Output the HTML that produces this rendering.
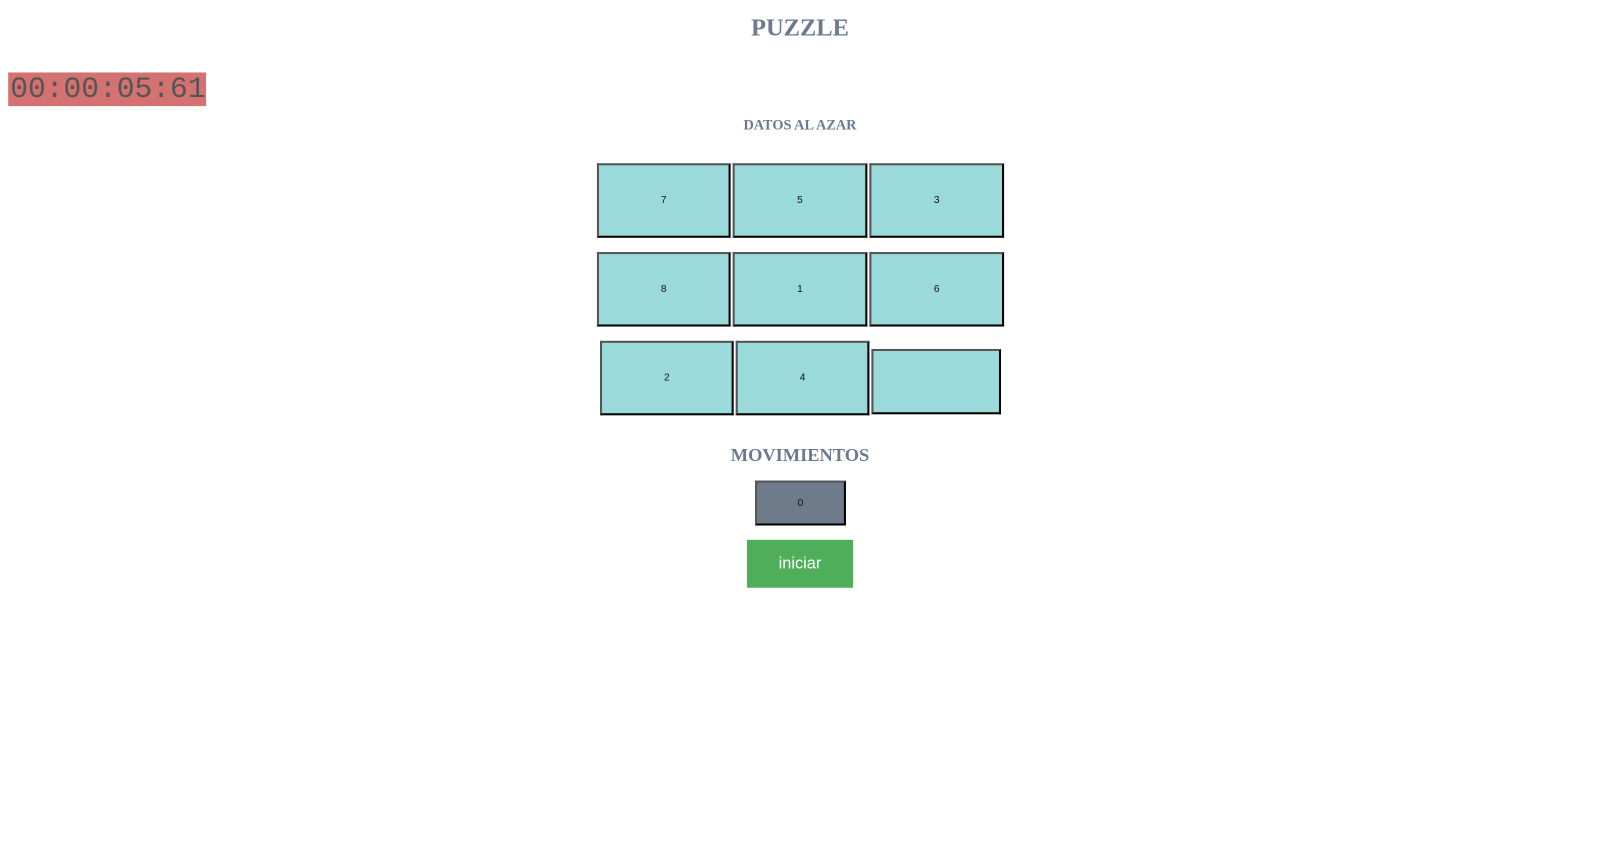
<!DOCTYPE html>
<html><head><style>
body{margin:0;width:1600px;height:860px;background:#fff;position:relative;font-family:"Liberation Sans",sans-serif;overflow:hidden}
#w{position:absolute;left:0;top:0;width:1568px;height:843px;transform:scale(1.0204);transform-origin:0 0}
.a{position:absolute}
.t{position:absolute;box-sizing:border-box;background:#9adada;border:2px solid;border-color:#555 #000 #000 #555;font-size:10px;color:#111;display:flex;align-items:center;justify-content:center}
.h{position:absolute;left:0;width:1568px;text-align:center;font-family:"Liberation Serif",serif;font-weight:bold;color:#6b7a8f}
</style></head><body><div id="w">
<div class="h" style="top:15px;font-size:24px">PUZZLE</div>
<div class="a" style="left:8px;top:71px;width:194px;height:33px;background:#d47272;color:#555;font-family:'Liberation Mono',monospace;font-size:29px;line-height:33px;padding-left:2px;box-sizing:border-box;overflow:hidden;white-space:nowrap">00:00:05:61</div>
<div class="h" style="top:116px;font-size:14px">DATOS AL AZAR</div>
<div class="t" style="left:585px;top:160px;width:131px;height:73px">7</div>
<div class="t" style="left:718px;top:160px;width:132px;height:73px">5</div>
<div class="t" style="left:852px;top:160px;width:132px;height:73px">3</div>
<div class="t" style="left:585px;top:247px;width:131px;height:73px">8</div>
<div class="t" style="left:718px;top:247px;width:132px;height:73px">1</div>
<div class="t" style="left:852px;top:247px;width:132px;height:73px">6</div>
<div class="t" style="left:588px;top:334px;width:131px;height:73px">2</div>
<div class="t" style="left:721px;top:334px;width:131px;height:73px">4</div>
<div class="t" style="left:854px;top:342px;width:127px;height:64px"></div>
<div class="h" style="top:436px;font-size:18px">MOVIMIENTOS</div>
<div class="t" style="left:740px;top:471px;width:89px;height:44px;background:#6e7b8b">0</div>
<div class="a" style="left:732px;top:529px;width:104px;height:47px;background:#4fae5a;color:#fff;font-size:16px;display:flex;align-items:center;justify-content:center">iniciar</div>
</div></body></html>
